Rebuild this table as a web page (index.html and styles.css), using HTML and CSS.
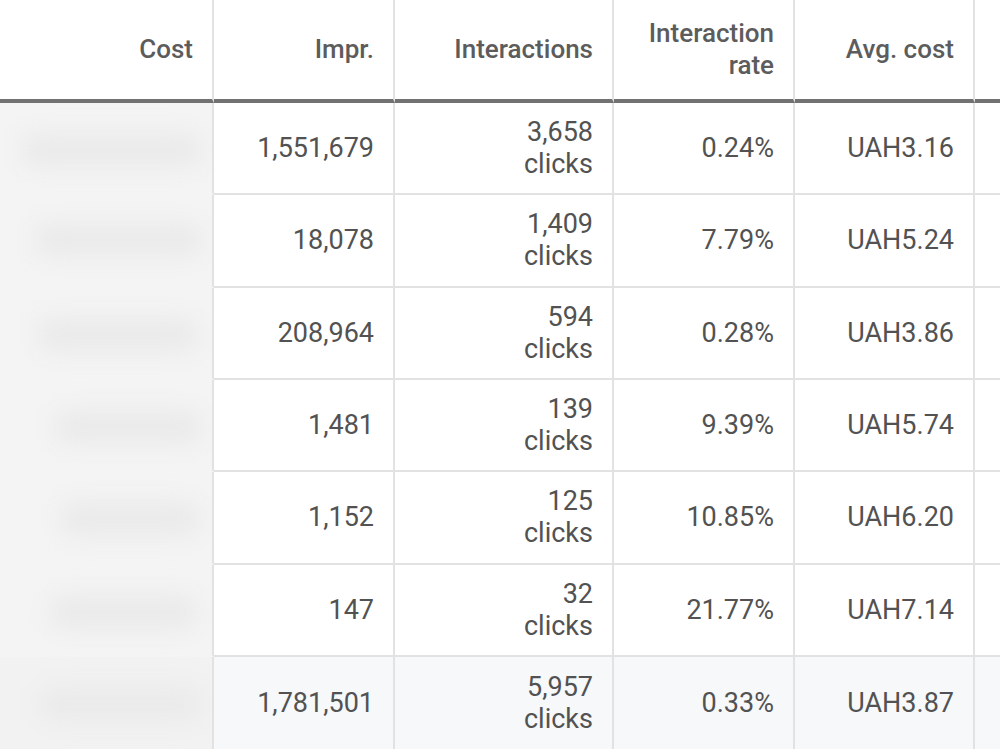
FILE: index.html
```html
<!DOCTYPE html>
<html>
<head>
<meta charset="utf-8">
<link rel="stylesheet" href="styles.css">
</head>
<body>
<div class="table">
  <div class="row head">
    <div class="cell cost-h">Cost</div>
    <div class="cell">Impr.</div>
    <div class="cell">Interactions</div>
    <div class="cell">Interaction<br>rate</div>
    <div class="cell">Avg. cost</div>
    <div class="cell tail"></div>
  </div>
  <div class="row">
    <div class="cell cost"><span class="blob b1"></span></div>
    <div class="cell">1,551,679</div>
    <div class="cell">3,658<br>clicks</div>
    <div class="cell">0.24%</div>
    <div class="cell">UAH3.16</div>
    <div class="cell tail"></div>
  </div>
  <div class="row">
    <div class="cell cost"><span class="blob b2"></span></div>
    <div class="cell">18,078</div>
    <div class="cell">1,409<br>clicks</div>
    <div class="cell">7.79%</div>
    <div class="cell">UAH5.24</div>
    <div class="cell tail"></div>
  </div>
  <div class="row">
    <div class="cell cost"><span class="blob b3"></span></div>
    <div class="cell">208,964</div>
    <div class="cell">594<br>clicks</div>
    <div class="cell">0.28%</div>
    <div class="cell">UAH3.86</div>
    <div class="cell tail"></div>
  </div>
  <div class="row">
    <div class="cell cost"><span class="blob b4"></span></div>
    <div class="cell">1,481</div>
    <div class="cell">139<br>clicks</div>
    <div class="cell">9.39%</div>
    <div class="cell">UAH5.74</div>
    <div class="cell tail"></div>
  </div>
  <div class="row">
    <div class="cell cost"><span class="blob b5"></span></div>
    <div class="cell">1,152</div>
    <div class="cell">125<br>clicks</div>
    <div class="cell">10.85%</div>
    <div class="cell">UAH6.20</div>
    <div class="cell tail"></div>
  </div>
  <div class="row">
    <div class="cell cost"><span class="blob b6"></span></div>
    <div class="cell">147</div>
    <div class="cell">32<br>clicks</div>
    <div class="cell">21.77%</div>
    <div class="cell">UAH7.14</div>
    <div class="cell tail"></div>
  </div>
  <div class="row total">
    <div class="cell cost"><span class="blob b7"></span></div>
    <div class="cell">1,781,501</div>
    <div class="cell">5,957<br>clicks</div>
    <div class="cell">0.33%</div>
    <div class="cell">UAH3.87</div>
    <div class="cell tail"></div>
  </div>
</div>
</body>
</html>
```

FILE: styles.css
```css
html, body {
  margin: 0;
  padding: 0;
  background: #ffffff;
  overflow: hidden;
}

.table {
  width: 1000px;
  font-family: Roboto, "Liberation Sans", sans-serif;
  color: #525252;
}

.row {
  display: grid;
  grid-template-columns: 214px 181px 219px 181px 180px 25px;
  height: 92.33px;
}

.cell {
  box-sizing: border-box;
  border-right: 2px solid #e2e2e2;
  border-bottom: 2px solid #e2e2e2;
  padding-right: 19px;
  display: flex;
  align-items: center;
  justify-content: flex-end;
  text-align: right;
  font-size: 27px;
  line-height: 32px;
}

.row.head {
  height: 103px;
}

.head .cell {
  border-bottom: 4px solid #727272;
  font-weight: 500;
  font-size: 26px;
  color: #5c5c5c;
  padding-bottom: 2px;
}

.cell.tail {
  border-right: none;
}

.cell.cost {
  position: relative;
  background: #f4f4f4;
  border-bottom-color: #f4f4f4;
  overflow: hidden;
}

.row.total .cell {
  background: #f6f8fa;
  border-bottom: none;
}

.row.total .cell.cost {
  background: #f2f2f2;
}

.blob {
  position: absolute;
  height: 34px;
  background: #eaeaea;
  border-radius: 14px;
  filter: blur(11px);
}

.b1 { left: 22px; right: 10px; top: 30px; }
.b2 { left: 35px; right: 10px; top: 28px; }
.b3 { left: 38px; right: 14px; top: 30px; }
.b4 { left: 55px; right: 10px; top: 30px; }
.b5 { left: 60px; right: 12px; top: 30px; }
.b6 { left: 50px; right: 15px; top: 30px; }
.b7 { left: 40px; right: 10px; top: 30px; }
```
